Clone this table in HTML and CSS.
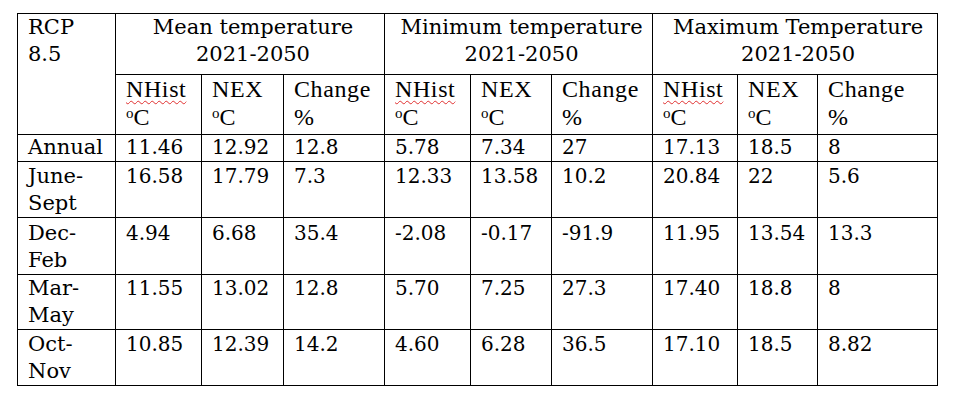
FILE: index.html
```html
<!DOCTYPE html>
<html lang="en">
<head>
<meta charset="utf-8">
<title>RCP 8.5 temperature table</title>
<link rel="stylesheet" href="styles.css">
</head>
<body>
<table class="tbl">
  <colgroup>
    <col class="c-label">
    <col class="c-a"><col class="c-b"><col class="c-c">
    <col class="c-a"><col class="c-b2"><col class="c-c">
    <col class="c-a2"><col class="c-b3"><col class="c-c2">
  </colgroup>
  <tr class="r-head1">
    <td class="g rowhead" rowspan="2">RCP<br>8.5</td>
    <td class="g group" colspan="3">Mean temperature<br>2021-2050</td>
    <td class="g group" colspan="3">Minimum temperature<br>2021-2050</td>
    <td class="g group" colspan="3">Maximum Temperature<br>2021-2050</td>
  </tr>
  <tr class="r-head2">
    <td class="t sub"><span class="spell">NHist</span><br><span class="deg">o</span>C</td>
    <td class="t sub">NEX<br><span class="deg">o</span>C</td>
    <td class="t sub">Change<br>%</td>
    <td class="t sub"><span class="spell">NHist</span><br><span class="deg">o</span>C</td>
    <td class="t sub">NEX<br><span class="deg">o</span>C</td>
    <td class="t sub">Change<br>%</td>
    <td class="t sub"><span class="spell">NHist</span><br><span class="deg">o</span>C</td>
    <td class="t sub">NEX<br><span class="deg">o</span>C</td>
    <td class="t sub">Change<br>%</td>
  </tr>
  <tr class="r-annual">
    <td class="g lab">Annual</td>
    <td class="g num">11.46</td><td class="g num">12.92</td><td class="g num">12.8</td>
    <td class="g num">5.78</td><td class="g num">7.34</td><td class="g num">27</td>
    <td class="g num">17.13</td><td class="g num">18.5</td><td class="g num">8</td>
  </tr>
  <tr class="r-two">
    <td class="g lab">June-<br>Sept</td>
    <td class="g num">16.58</td><td class="g num">17.79</td><td class="g num">7.3</td>
    <td class="g num">12.33</td><td class="g num">13.58</td><td class="g num">10.2</td>
    <td class="g num">20.84</td><td class="g num">22</td><td class="g num">5.6</td>
  </tr>
  <tr class="r-two r-tall">
    <td class="g lab">Dec-<br>Feb</td>
    <td class="g num">4.94</td><td class="g num">6.68</td><td class="g num">35.4</td>
    <td class="g num">-2.08</td><td class="g num">-0.17</td><td class="g num">-91.9</td>
    <td class="g num">11.95</td><td class="g num">13.54</td><td class="g num">13.3</td>
  </tr>
  <tr class="r-two r-short">
    <td class="g lab">Mar-<br>May</td>
    <td class="g num">11.55</td><td class="g num">13.02</td><td class="g num">12.8</td>
    <td class="g num">5.70</td><td class="g num">7.25</td><td class="g num">27.3</td>
    <td class="g num">17.40</td><td class="g num">18.8</td><td class="g num">8</td>
  </tr>
  <tr class="r-two">
    <td class="g lab">Oct-<br>Nov</td>
    <td class="g num">10.85</td><td class="g num">12.39</td><td class="g num">14.2</td>
    <td class="g num">4.60</td><td class="g num">6.28</td><td class="g num">36.5</td>
    <td class="g num">17.10</td><td class="g num">18.5</td><td class="g num">8.82</td>
  </tr>
</table>
</body>
</html>
```
FILE: styles.css
```css
html, body {
  margin: 0;
  padding: 0;
  background: #ffffff;
}
body {
  padding: 13px 0 0 17px;
  color: #000000;
}
.tbl {
  border-collapse: collapse;
  table-layout: fixed;
  width: 920px;
}
.c-label { width: 98px; }
.c-a { width: 86px; }
.c-b { width: 82px; }
.c-b2 { width: 81px; }
.c-b3 { width: 80px; }
.c-c { width: 101px; }
.c-a2 { width: 85px; }
.c-c2 { width: 120px; }

.tbl td {
  border: 1px solid #000000;
  vertical-align: top;
  padding: 0 4px 0 10px;
  white-space: nowrap;
  overflow: hidden;
}
.g {
  font-family: "DejaVu Serif", "Liberation Serif", serif;
  font-size: 21px;
  line-height: 27px;
}
.t {
  font-family: "Liberation Serif", "Times New Roman", serif;
  font-size: 24px;
  letter-spacing: 0.6px;
  line-height: 28px;
}
.rowhead { padding-top: 2px; }
.group {
  text-align: center;
  padding: 2px 0 0 0;
}
.r-head1 { height: 61px; }
.r-head2 { height: 60px; }
.sub { padding-top: 1px; }
.spell {
  text-decoration: underline wavy #e03030;
  text-decoration-thickness: 1px;
  text-underline-offset: 3px;
}
.deg {
  font-size: 15px;
  vertical-align: 7px;
  line-height: 0;
  letter-spacing: 0;
}
.num { font-size: 20px; }
.r-annual { height: 27px; }
.r-annual td { line-height: 25px; }
.r-two { height: 56px; }
.r-two td { padding-top: 1px; }
.r-tall { height: 57px; }
.r-tall td { padding-top: 2px; }
.r-short { height: 55px; }
.r-short td { padding-top: 0; }
```
